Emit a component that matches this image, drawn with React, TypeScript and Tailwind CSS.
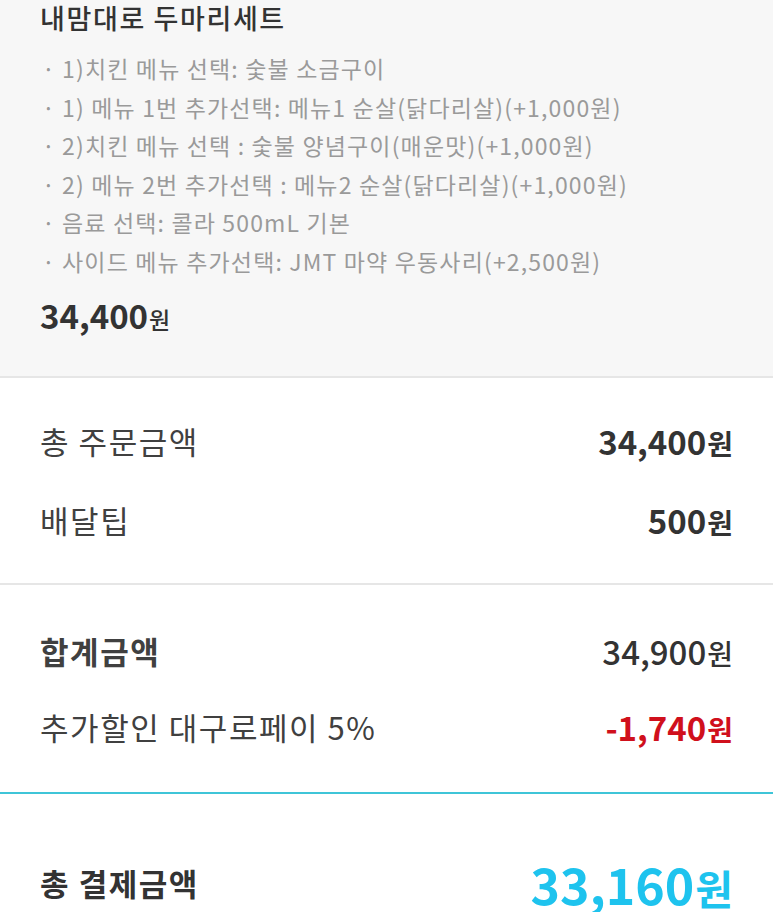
import React from 'react';

const options = [
  '1)치킨 메뉴 선택: 숯불 소금구이',
  '1) 메뉴 1번 추가선택: 메뉴1 순살(닭다리살)(+1,000원)',
  '2)치킨 메뉴 선택 : 숯불 양념구이(매운맛)(+1,000원)',
  '2) 메뉴 2번 추가선택 : 메뉴2 순살(닭다리살)(+1,000원)',
  '음료 선택: 콜라 500mL 기본',
  '사이드 메뉴 추가선택: JMT 마약 우동사리(+2,500원)',
];

function Amount({ value, className = '', unit = 'text-[28px]' }: { value: string; className?: string; unit?: string }) {
  return (
    <span className={`flex items-baseline ${className}`}>
      <span>{value}</span>
      <span className={`${unit} ml-[1px]`}>원</span>
    </span>
  );
}

function Row({ label, children, labelClass = '' }: { label: string; children: React.ReactNode; labelClass?: string }) {
  return (
    <div className="flex h-10 items-center justify-between">
      <span className={`text-[31px] tracking-[0.05em] text-[#404040] ${labelClass}`}>{label}</span>
      {children}
    </div>
  );
}

export default function App() {
  return (
    <div
      className="min-h-screen bg-white"
      style={{ fontFamily: '"Noto Sans CJK KR", "Noto Sans", sans-serif' }}
    >
      {/* 주문 메뉴 */}
      <section className="border-b-2 border-[#e6e6e6] bg-[#f7f7f7] px-10 pb-[40px]">
        <h2 className="text-[27px] font-medium leading-9 tracking-[0.06em] text-[#333]">내맘대로 두마리세트</h2>
        <ul className="mt-[13px] text-[23px] tracking-[0.05em] text-[#9a9a9a]">
          {options.map((o) => (
            <li key={o} className="h-[38.6px] leading-[38.6px]">
              <span className="ml-[2px] mr-[6px]">·</span>
              {o}
            </li>
          ))}
        </ul>
        <div className="mt-[15px] flex h-10 items-center text-[#333]">
          <Amount value="34,400" className="text-[33px] font-bold" unit="text-[23px] font-medium" />
        </div>
      </section>

      {/* 주문금액 */}
      <section className="flex flex-col gap-[39px] border-b-2 border-[#e6e6e6] px-10 pb-[42px] pt-[44px]">
        <Row label="총 주문금액">
          <Amount value="34,400" className="text-[33px] font-bold text-[#333]" />
        </Row>
        <Row label="배달팁">
          <Amount value="500" className="text-[33px] font-bold text-[#333]" />
        </Row>
      </section>

      {/* 합계 */}
      <section className="flex flex-col gap-[36px] border-b-2 border-[#3fc5d8] px-10 pb-[44px] pt-[47px]">
        <Row label="합계금액" labelClass="font-bold text-[#333]">
          <Amount value="34,900" className="text-[33px] font-medium text-[#333]" />
        </Row>
        <Row label="추가할인 대구로페이 5%">
          <Amount value="-1,740" className="text-[33px] font-bold text-[#d0101c]" />
        </Row>
      </section>

      {/* 총 결제금액 */}
      <section className="px-10 pt-[60px]">
        <div className="flex h-[60px] items-center justify-between">
          <span className="text-[31px] font-bold tracking-[0.05em] text-[#333]">총 결제금액</span>
          <Amount value="33,160" className="text-[50px] font-bold text-[#1ec3ee]" unit="text-[41px]" />
        </div>
      </section>
    </div>
  );
}
